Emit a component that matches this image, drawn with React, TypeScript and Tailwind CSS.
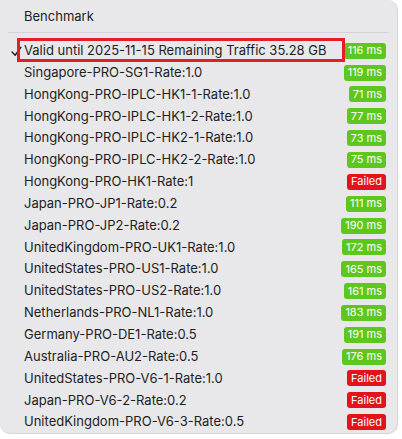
import React from "react";

type Row = { name: string; ms?: number; checked?: boolean; boxed?: boolean };

const rows: Row[] = [
  { name: "Valid until 2025-11-15 Remaining Traffic 35.28 GB", ms: 116, checked: true, boxed: true },
  { name: "Singapore-PRO-SG1-Rate:1.0", ms: 119 },
  { name: "HongKong-PRO-IPLC-HK1-1-Rate:1.0", ms: 71 },
  { name: "HongKong-PRO-IPLC-HK1-2-Rate:1.0", ms: 77 },
  { name: "HongKong-PRO-IPLC-HK2-1-Rate:1.0", ms: 73 },
  { name: "HongKong-PRO-IPLC-HK2-2-Rate:1.0", ms: 75 },
  { name: "HongKong-PRO-HK1-Rate:1" },
  { name: "Japan-PRO-JP1-Rate:0.2", ms: 111 },
  { name: "Japan-PRO-JP2-Rate:0.2", ms: 190 },
  { name: "UnitedKingdom-PRO-UK1-Rate:1.0", ms: 172 },
  { name: "UnitedStates-PRO-US1-Rate:1.0", ms: 165 },
  { name: "UnitedStates-PRO-US2-Rate:1.0", ms: 161 },
  { name: "Netherlands-PRO-NL1-Rate:1.0", ms: 183 },
  { name: "Germany-PRO-DE1-Rate:0.5", ms: 191 },
  { name: "Australia-PRO-AU2-Rate:0.5", ms: 176 },
  { name: "UnitedStates-PRO-V6-1-Rate:1.0" },
  { name: "Japan-PRO-V6-2-Rate:0.2" },
  { name: "UnitedKingdom-PRO-V6-3-Rate:0.5" },
];

function Badge({ ms }: { ms?: number }) {
  if (ms === undefined) {
    return (
      <span className="flex h-[16px] items-center rounded-[3px] bg-[#e3121b] px-[4px] text-[11px] leading-none text-white">
        Failed
      </span>
    );
  }
  return (
    <span className="flex h-[16px] items-center rounded-[3px] bg-[#5ec71d] px-[4px] text-[11px] leading-none text-white">
      {ms} ms
    </span>
  );
}

export default function App() {
  return (
    <div className="h-[439px] w-[402px] overflow-hidden bg-white" style={{ fontFamily: 'Inter, "Liberation Sans", Arial, sans-serif' }}>
      <div className="flex h-[434px] w-[398px] flex-col rounded-b-[10px] rounded-tr-[10px] border-r border-b border-[#d6d5d7] bg-[#e8e7e9] pt-[6px] text-[13px] text-[#1e1e1e]">
        <div className="flex h-[22px] items-center pl-[24px]">Benchmark</div>
        <div className="mx-[8px] mt-[4px] mb-[7px] h-px bg-[#d3d2d4]" />
        {rows.map((r) => (
          <div key={r.name} className="relative flex h-[22px] items-center pr-[11px] pl-[24px]">
            {r.checked && (
              <svg className="absolute top-[6px] left-[11px]" width="11" height="11" viewBox="0 0 10 10">
                <path d="M1 5.4 L3.8 8.4 L9 1.2" fill="none" stroke="#1e1e1e" strokeWidth="1.3" strokeLinecap="round" strokeLinejoin="round" />
              </svg>
            )}
            {r.boxed && (
              <div className="absolute top-[-2px] left-[17px] h-[24px] w-[328px] border-[3px] border-[#e21f26]" />
            )}
            <span className="flex-1">{r.name}</span>
            <Badge ms={r.ms} />
          </div>
        ))}
      </div>
    </div>
  );
}
